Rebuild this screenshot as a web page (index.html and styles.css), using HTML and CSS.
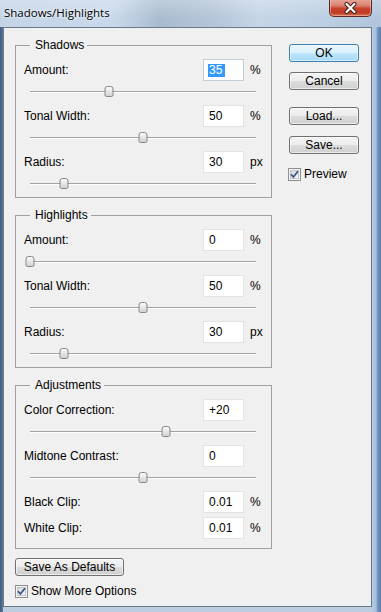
FILE: index.html
```html
<!DOCTYPE html>
<html>
<head>
<meta charset="utf-8">
<title>Shadows/Highlights</title>
<link rel="stylesheet" href="styles.css">
</head>
<body>
<div class="window">
  <div class="titlebar">
    <span class="title">Shadows/Highlights</span>
    <div class="close">
      <svg width="17" height="12" viewBox="0 0 17 12">
        <path d="M4.5 2 L12.5 10 M12.5 2 L4.5 10" stroke="#3a1a14" stroke-width="4" stroke-linecap="round" fill="none"/>
        <path d="M4.5 2 L12.5 10 M12.5 2 L4.5 10" stroke="#ffffff" stroke-width="2.2" stroke-linecap="round" fill="none"/>
      </svg>
    </div>
  </div>
  <div class="frame">
    <div class="client">
      <div class="left">
        <fieldset class="group">
          <legend>Shadows</legend>
          <div class="row"><span class="label">Amount:</span><div class="field focus"><span class="sel">35</span></div><span class="unit">%</span></div>
          <div class="slider"><div class="track"><div class="thumb" style="left:35%"></div></div></div>
          <div class="row"><span class="label">Tonal Width:</span><div class="field">50</div><span class="unit">%</span></div>
          <div class="slider"><div class="track"><div class="thumb" style="left:50%"></div></div></div>
          <div class="row"><span class="label">Radius:</span><div class="field">30</div><span class="unit">px</span></div>
          <div class="slider"><div class="track"><div class="thumb" style="left:15%"></div></div></div>
        </fieldset>
        <fieldset class="group">
          <legend>Highlights</legend>
          <div class="row"><span class="label">Amount:</span><div class="field">0</div><span class="unit">%</span></div>
          <div class="slider"><div class="track"><div class="thumb" style="left:0%"></div></div></div>
          <div class="row"><span class="label">Tonal Width:</span><div class="field">50</div><span class="unit">%</span></div>
          <div class="slider"><div class="track"><div class="thumb" style="left:50%"></div></div></div>
          <div class="row"><span class="label">Radius:</span><div class="field">30</div><span class="unit">px</span></div>
          <div class="slider"><div class="track"><div class="thumb" style="left:15%"></div></div></div>
        </fieldset>
        <fieldset class="group last">
          <legend>Adjustments</legend>
          <div class="row"><span class="label">Color Correction:</span><div class="field">+20</div><span class="unit"></span></div>
          <div class="slider"><div class="track"><div class="thumb" style="left:60%"></div></div></div>
          <div class="row"><span class="label">Midtone Contrast:</span><div class="field">0</div><span class="unit"></span></div>
          <div class="slider"><div class="track"><div class="thumb" style="left:50%"></div></div></div>
          <div class="row"><span class="label">Black Clip:</span><div class="field">0.01</div><span class="unit">%</span></div>
          <div class="row gap"><span class="label">White Clip:</span><div class="field">0.01</div><span class="unit">%</span></div>
        </fieldset>
        <div class="btn defaults">Save As Defaults</div>
        <div class="check-row bottom-check">
          <svg class="checkbox" width="13" height="13" viewBox="0 0 13 13">
            <defs><linearGradient id="cb1" x1="0" y1="0" x2="1" y2="1"><stop offset="0" stop-color="#d4d4d4"/><stop offset="1" stop-color="#fafafa"/></linearGradient></defs>
            <rect x="0.5" y="0.5" width="12" height="12" fill="#f4f4f4" stroke="#8e8f8f"/>
            <rect x="2.5" y="2.5" width="8" height="8" fill="url(#cb1)" stroke="#c4c4c4"/>
            <path d="M3 6.3 L5.4 9 L10 3.2" stroke="#33508c" stroke-width="1.7" fill="none"/>
          </svg>
          <span>Show More Options</span>
        </div>
      </div>
      <div class="right">
        <div class="btn default">OK</div>
        <div class="btn cancel">Cancel</div>
        <div class="btn load">Load...</div>
        <div class="btn save">Save...</div>
        <div class="check-row preview">
          <svg class="checkbox" width="13" height="13" viewBox="0 0 13 13">
            <defs><linearGradient id="cb2" x1="0" y1="0" x2="1" y2="1"><stop offset="0" stop-color="#d4d4d4"/><stop offset="1" stop-color="#fafafa"/></linearGradient></defs>
            <rect x="0.5" y="0.5" width="12" height="12" fill="#f4f4f4" stroke="#8e8f8f"/>
            <rect x="2.5" y="2.5" width="8" height="8" fill="url(#cb2)" stroke="#c4c4c4"/>
            <path d="M3 6.3 L5.4 9 L10 3.2" stroke="#33508c" stroke-width="1.7" fill="none"/>
          </svg>
          <span>Preview</span>
        </div>
      </div>
    </div>
  </div>
</div>
</body>
</html>
```

FILE: styles.css
```css
html, body {
  margin: 0;
  padding: 0;
}
body {
  width: 381px;
  height: 612px;
  overflow: hidden;
  font-family: "Liberation Sans", Arial, sans-serif;
  font-size: 12px;
  color: #000;
}
.window {
  width: 381px;
  height: 612px;
  display: flex;
  flex-direction: column;
  background: linear-gradient(to bottom, #c4d5e8 0%, #b4c8dd 60%, #a9bed6 100%);
}
.titlebar {
  height: 27px;
  flex: none;
  display: flex;
  justify-content: space-between;
  align-items: flex-start;
  padding: 0 9px 0 4px;
  background:
    linear-gradient(to bottom, rgba(255,255,255,0.25), rgba(255,255,255,0) 70%),
    linear-gradient(to right, #c3d4e7 0%, #c8d8ea 30%, #a9bccf 42%, #b3c4d6 55%, #c5d5e7 68%, #bccfe3 85%, #b0c5dc 100%);
}
.title {
  font-family: "Open Sans", "Noto Sans", sans-serif;
  font-size: 11.5px;
  line-height: 16px;
  padding-top: 5px;
  color: #000;
  text-shadow: 0 0 6px rgba(255,255,255,0.9), 0 0 3px rgba(255,255,255,0.7);
}
.close {
  width: 43px;
  height: 18px;
  box-sizing: border-box;
  margin-top: -1px;
  border: 1px solid #5b2a20;
  border-top: none;
  border-radius: 0 0 5px 5px;
  background: linear-gradient(to bottom, #e9a99a 0%, #d8806f 40%, #c7432f 55%, #c13b27 80%, #d9714f 100%);
  box-shadow: inset 0 0 0 1px rgba(255,220,210,0.45);
  display: flex;
  align-items: center;
  justify-content: center;
}
.frame {
  flex: 1;
  display: flex;
  padding: 0 9px 5px 3px;
  background: linear-gradient(to right, #3e5a7c 0px, #5d7b9d 3px, #bccde0 3px, #bccde0 372px, #b4cde6 372px, #a4c0de 376px, #6f8fb7 378px, #5c7fac 381px);
}
.client {
  width: 369px;
  height: 580px;
  box-sizing: border-box;
  border: 1px solid #6b7886;
  background: #f0f0f0;
  display: grid;
  grid-template-columns: 257px 70px;
  column-gap: 17px;
  align-items: start;
  padding: 10px 0 0 11px;
}
.left {
  display: flex;
  flex-direction: column;
}
.group {
  margin: 0;
  border: 1px solid #a0a0a0;
  padding: 7px 5px 0 8px;
  min-width: 0;
}
.group + .group {
  margin-top: 10px;
}
.group.last {
  padding-bottom: 9px;
}
legend {
  padding: 0 3px 0 5px;
  margin-left: 6px;
  line-height: 14px;
}
.row {
  display: flex;
  align-items: center;
  height: 22px;
}
.row.gap {
  margin-top: 4px;
}
.label {
  flex: 1;
}
.field {
  width: 41px;
  height: 22px;
  box-sizing: border-box;
  border: 1px solid #e3e3e3;
  background: #fff;
  padding-left: 5px;
  line-height: 20px;
}
.field.focus {
  border-color: #c3d0dc;
}
.sel {
  display: inline-block;
  margin-left: -1px;
  padding: 0 3px 0 1px;
  line-height: 13px;
  background: #3399ff;
  color: #fff;
  vertical-align: middle;
}
.unit {
  width: 16px;
  margin-left: 6px;
}
.slider {
  height: 24px;
  box-sizing: border-box;
  padding-top: 10px;
  margin: 0 10px 0 6px;
}
.track {
  position: relative;
  height: 1px;
  background: #a3a3a3;
  border-bottom: 1px solid #ffffff;
}
.thumb {
  position: absolute;
  top: -5px;
  width: 9px;
  height: 11px;
  box-sizing: border-box;
  transform: translateX(-50%);
  border: 1px solid #858585;
  border-radius: 3px 3px 2px 2px;
  background: linear-gradient(to bottom, #fbfbfb, #e2e2e2 60%, #d2d2d2);
}
.btn {
  height: 18px;
  box-sizing: border-box;
  border: 1px solid #707070;
  border-radius: 3px;
  background: linear-gradient(to bottom, #f4f4f4 0%, #ebebeb 50%, #dddddd 50%, #cfcfcf 100%);
  box-shadow: inset 0 0 0 1px rgba(255,255,255,0.6);
  text-align: center;
  line-height: 16px;
}
.btn.default {
  border-color: #3c7fb1;
  background: linear-gradient(to bottom, #eaf6fd 0%, #d9f0fc 50%, #bee6fd 50%, #a7d9f5 100%);
  box-shadow: inset 0 0 0 1px rgba(255,255,255,0.5);
}
.right {
  display: flex;
  flex-direction: column;
  padding-top: 6px;
}
.btn.cancel { margin-top: 10px; }
.btn.load { margin-top: 17px; }
.btn.save { margin-top: 11px; }
.btn.defaults {
  width: 109px;
  margin-top: 9px;
}
.check-row {
  display: flex;
  align-items: center;
  height: 14px;
}
.checkbox {
  flex: none;
  margin-right: 3px;
}
.preview {
  margin-top: 13px;
  margin-left: -1px;
}
.bottom-check {
  margin-top: 8px;
}
```
